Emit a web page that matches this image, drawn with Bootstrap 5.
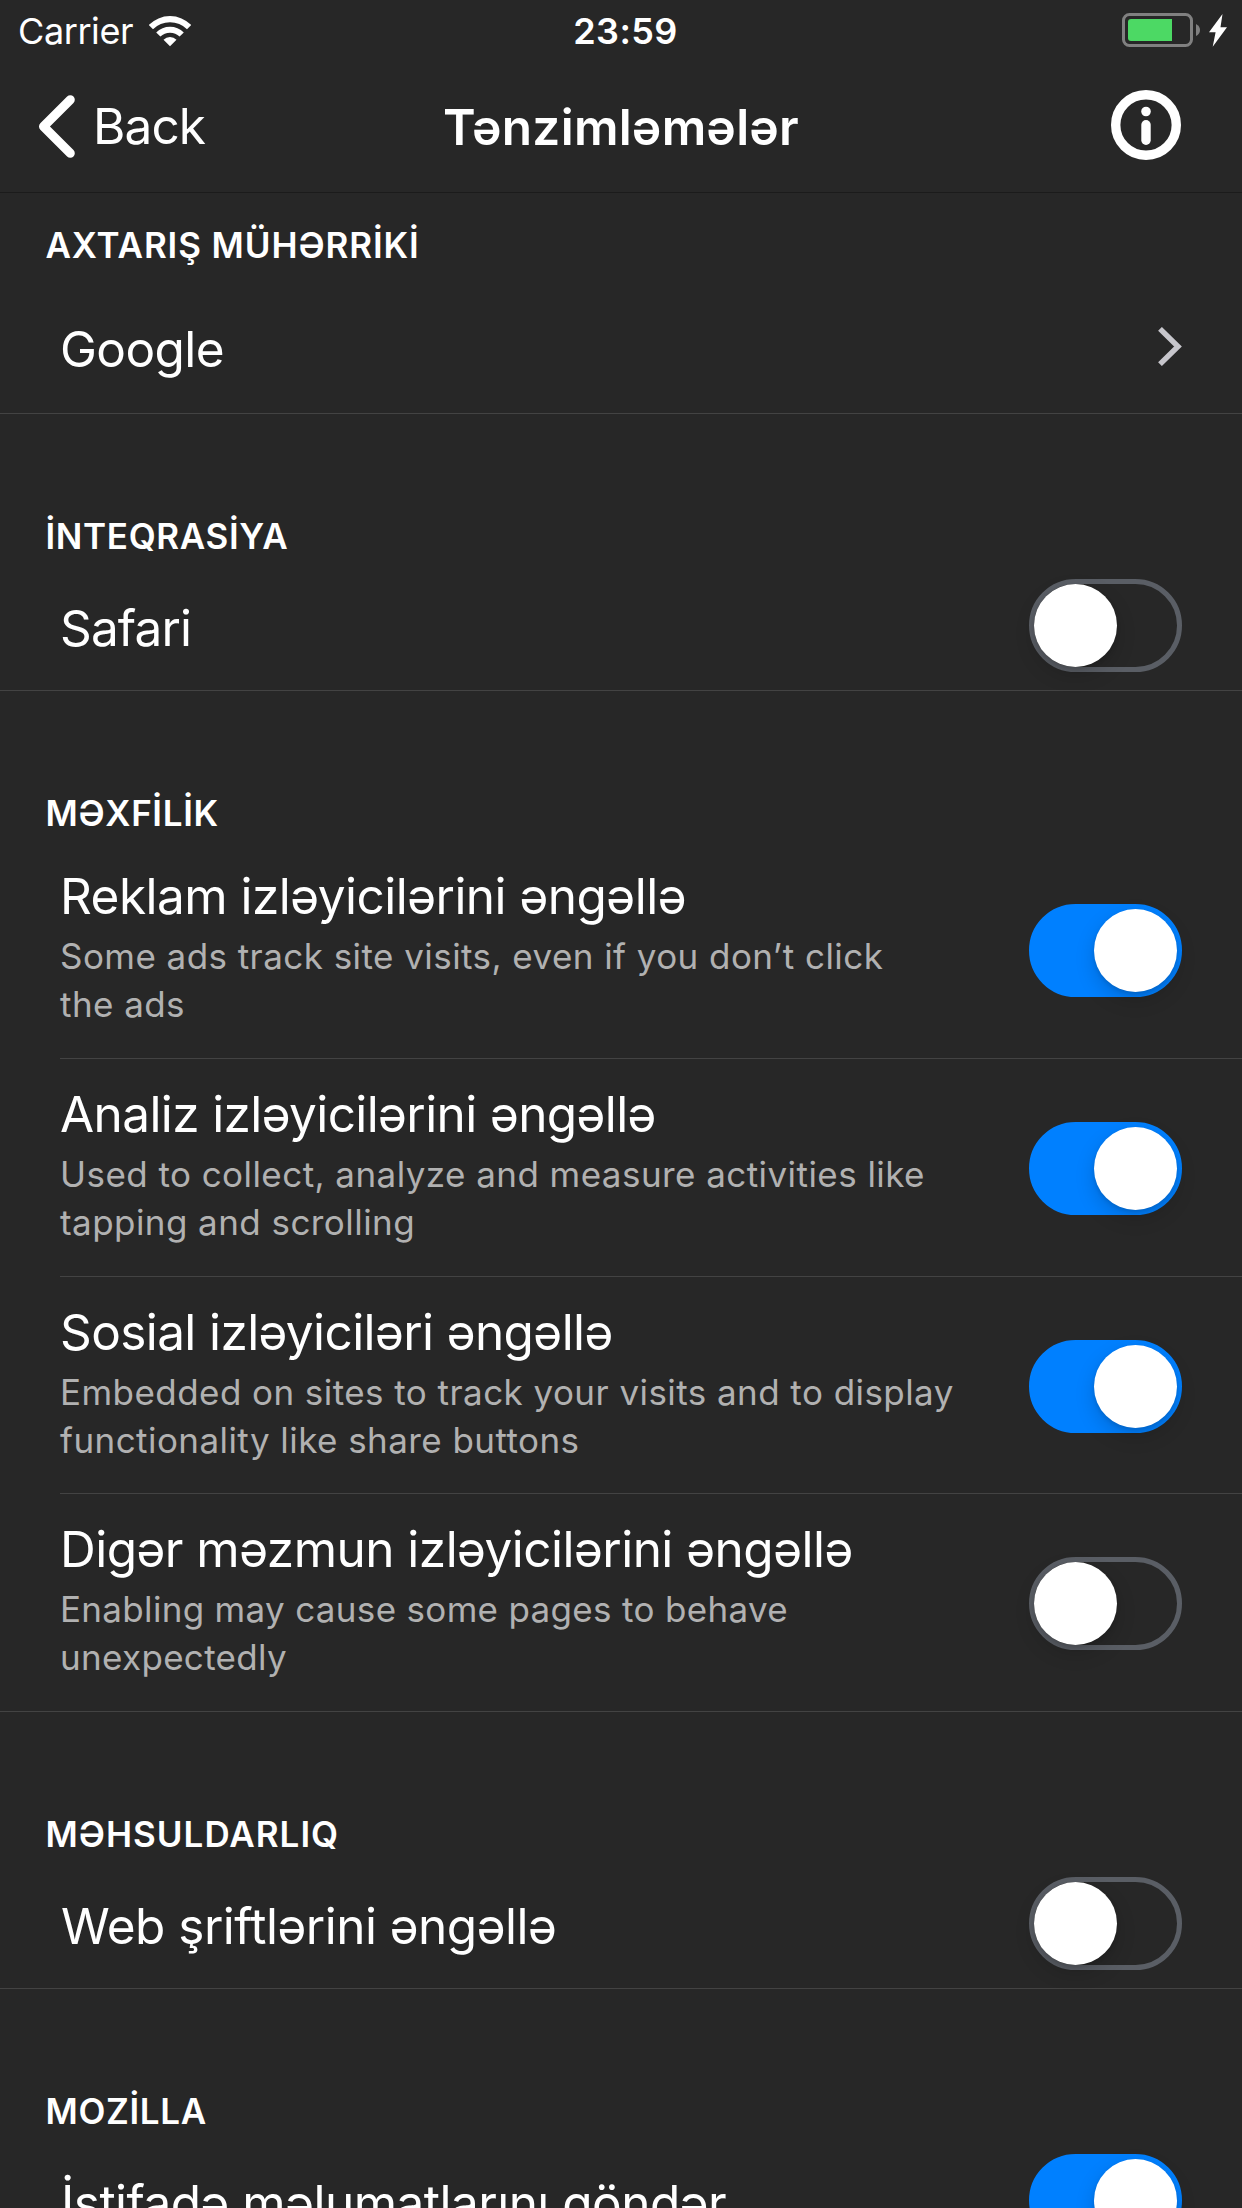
<!DOCTYPE html>
<html lang="az" data-bs-theme="dark">
<head>
<meta charset="utf-8">
<meta name="viewport" content="width=device-width, initial-scale=1">
<title>Tənzimləmələr</title>
<link href="https://cdn.jsdelivr.net/npm/bootstrap@5.3.0/dist/css/bootstrap.min.css" rel="stylesheet">
<style>
  body { background: #272727; color: #fff; font-family: Inter, "Liberation Sans", sans-serif; font-size: 49.5px; line-height: 60px; }
  .screen { width: 1242px; height: 2208px; background: #272727; }
  svg { display: block; flex: none; }

  .status-bar { height: 62px; font-size: 36px; line-height: 62px; }
  .status-left { gap: 16px; letter-spacing: -.41px; }
  .status-left span { margin-left: 18px; }
  .status-right svg { margin-right: 14px; }
  .clock { letter-spacing: .39px; font-weight: 600; padding-left: 9px; }

  .top-nav { height: 131px; border-bottom: 1px solid #1b1b1b; padding-bottom: 2px; }
  .back-btn { gap: 18px; letter-spacing: -.9px; }
  .back-btn svg { margin-left: 38px; }
  .nav-heading { font-weight: 600; letter-spacing: .32px; padding-top: 1px; }
  .info-btn svg { margin-right: 61px; }

  .group-heading { font-size: 35px; font-weight: 600; line-height: 65px; letter-spacing: .65px; padding: 90px 0 0 45.5px; margin: 0; }
  .group-heading.first { padding: 20px 0 2px 45.5px; letter-spacing: .9px; }
  .group-heading.wide { letter-spacing: 1px; }
  .group-heading.tight { margin-bottom: -5px; }

  .setting { border-bottom: 1px solid #434343; padding: 0 60px; height: 122px; letter-spacing: -.52px; }
  .setting.link-row { height: 134px; }
  .setting.switch-row { padding-bottom: 9px; }
  .setting .label { padding: 5px 0 0 1px; }
  .setting .label.short { letter-spacing: -.85px; padding-left: 0; }
  .setting .label.google { letter-spacing: -.6px; padding-left: 0; }
  .snug { letter-spacing: -.6px; }

  .setting.detailed { height: 218px; padding: 25px 60px 0 0; margin-left: 60px; }
  .setting.detailed.compact { height: 217px; }
  .setting.detailed.full { margin-left: 0; padding-left: 60px; }
  .setting.detailed .toggle { margin-top: 38px; }
  .note { color: #b1b1b1; font-size: 35px; line-height: 48px; letter-spacing: .44px; margin-top: 6px; white-space: nowrap; }
  .note.narrow { letter-spacing: .32px; }

  .toggle { width: 153px; height: 93px; border-radius: 47px; border: 5px solid #5a5e65; flex: none; }
  .knob { width: 83px; height: 83px; border-radius: 50%; background: #fff; box-shadow: 0 8px 20px rgba(0,0,0,.16), 0 2px 4px rgba(0,0,0,.12); }
  .toggle.on { background: #0080ff; border-color: #0080ff; }
  .toggle.on .knob { margin-left: auto; }
</style>
<script src="https://cdn.jsdelivr.net/npm/bootstrap@5.3.0/dist/js/bootstrap.bundle.min.js"></script>
</head>
<body>
<div class="screen overflow-hidden">

  <div class="status-bar row g-0 align-items-center">
    <div class="col status-left d-flex align-items-center">
      <span>Carrier</span>
      <svg width="42" height="31" viewBox="0 0 42 31" fill="#fff">
        <path d="M-.2 9A29.7 29.7 0 0 1 42.2 9L38 13.2A24 24 0 0 0 4 13.2Z"/>
        <path d="M7.2 16.4A19.6 19.6 0 0 1 34.8 16.4L30.6 20.6A13.6 13.6 0 0 0 11.4 20.6Z"/>
        <path d="M14.5 23.7A9.3 9.3 0 0 1 27.5 23.7L21 30.2Z"/>
      </svg>
    </div>
    <div class="col-auto clock">23:59</div>
    <div class="col status-right d-flex justify-content-end">
      <svg width="106" height="36" viewBox="0 0 106 36">
        <rect x="1.5" y="1.5" width="68" height="31" rx="6" fill="none" stroke="#808080" stroke-width="3"/>
        <path d="M9 6H50V28H9Q6 28 6 25V9Q6 6 9 6Z" fill="#4cd964"/>
        <path d="M74 11Q78 13 78 17T74 23Z" fill="#808080"/>
        <path d="M100.5 1L87 19.3H93.6L90.7 33.7L105 14.3H98.5Z" fill="#fff"/>
      </svg>
    </div>
  </div>

  <nav class="top-nav row g-0 align-items-center">
    <div class="col back-btn d-flex align-items-center">
      <svg width="37" height="63" viewBox="0 0 37 63" fill="none" stroke="#fff" stroke-width="9" stroke-linecap="round" stroke-linejoin="round"><path d="M32.3 4.7L5.5 31.5L32.3 58.3"/></svg>
      <span>Back</span>
    </div>
    <div class="col-auto nav-heading">Tənzimləmələr</div>
    <div class="col info-btn d-flex justify-content-end">
      <svg width="70" height="72" viewBox="0 0 70 72"><circle cx="35" cy="35" r="30.3" fill="none" stroke="#fff" stroke-width="9.4"/><circle cx="35" cy="21.5" r="4.8" fill="#fff"/><rect x="30.3" y="30" width="9.4" height="25" rx="4.7" fill="#fff"/></svg>
    </div>
  </nav>

  <section>
    <h2 class="group-heading first">AXTARIŞ MÜHƏRRİKİ</h2>
    <div class="setting link-row d-flex align-items-center justify-content-between">
      <div class="label google">Google</div>
      <svg width="24" height="39" viewBox="0 0 24 39" fill="none" stroke="#c7c6cc" stroke-width="5.4"><path d="M2 1.9L20 19.5L2 37.1"/></svg>
    </div>
  </section>

  <section>
    <h2 class="group-heading">İNTEQRASİYA</h2>
    <div class="setting switch-row d-flex align-items-center justify-content-between">
      <div class="label short">Safari</div>
      <div class="toggle" role="switch" aria-checked="false"><div class="knob"></div></div>
    </div>
  </section>

  <section>
    <h2 class="group-heading tight">MƏXFİLİK</h2>
    <div class="setting detailed d-flex align-items-start justify-content-between">
      <div>
        <div>Reklam izləyicilərini əngəllə</div>
        <div class="note">Some ads track site visits, even if you don’t click<br>the ads</div>
      </div>
      <div class="toggle on" role="switch" aria-checked="true"><div class="knob"></div></div>
    </div>
    <div class="setting detailed d-flex align-items-start justify-content-between">
      <div>
        <div class="snug">Analiz izləyicilərini əngəllə</div>
        <div class="note">Used to collect, analyze and measure activities like<br>tapping and scrolling</div>
      </div>
      <div class="toggle on" role="switch" aria-checked="true"><div class="knob"></div></div>
    </div>
    <div class="setting detailed compact d-flex align-items-start justify-content-between">
      <div>
        <div class="snug">Sosial izləyiciləri əngəllə</div>
        <div class="note">Embedded on sites to track your visits and to display<br>functionality like share buttons</div>
      </div>
      <div class="toggle on" role="switch" aria-checked="true"><div class="knob"></div></div>
    </div>
    <div class="setting detailed full d-flex align-items-start justify-content-between">
      <div>
        <div>Digər məzmun izləyicilərini əngəllə</div>
        <div class="note narrow">Enabling may cause some pages to behave<br>unexpectedly</div>
      </div>
      <div class="toggle" role="switch" aria-checked="false"><div class="knob"></div></div>
    </div>
  </section>

  <section>
    <h2 class="group-heading wide">MƏHSULDARLIQ</h2>
    <div class="setting switch-row d-flex align-items-center justify-content-between">
      <div class="label">Web şriftlərini əngəllə</div>
      <div class="toggle" role="switch" aria-checked="false"><div class="knob"></div></div>
    </div>
  </section>

  <section>
    <h2 class="group-heading">MOZİLLA</h2>
    <div class="setting switch-row d-flex align-items-center justify-content-between">
      <div class="label">İstifadə məlumatlarını göndər</div>
      <div class="toggle on" role="switch" aria-checked="true"><div class="knob"></div></div>
    </div>
  </section>

</div>
</body>
</html>
